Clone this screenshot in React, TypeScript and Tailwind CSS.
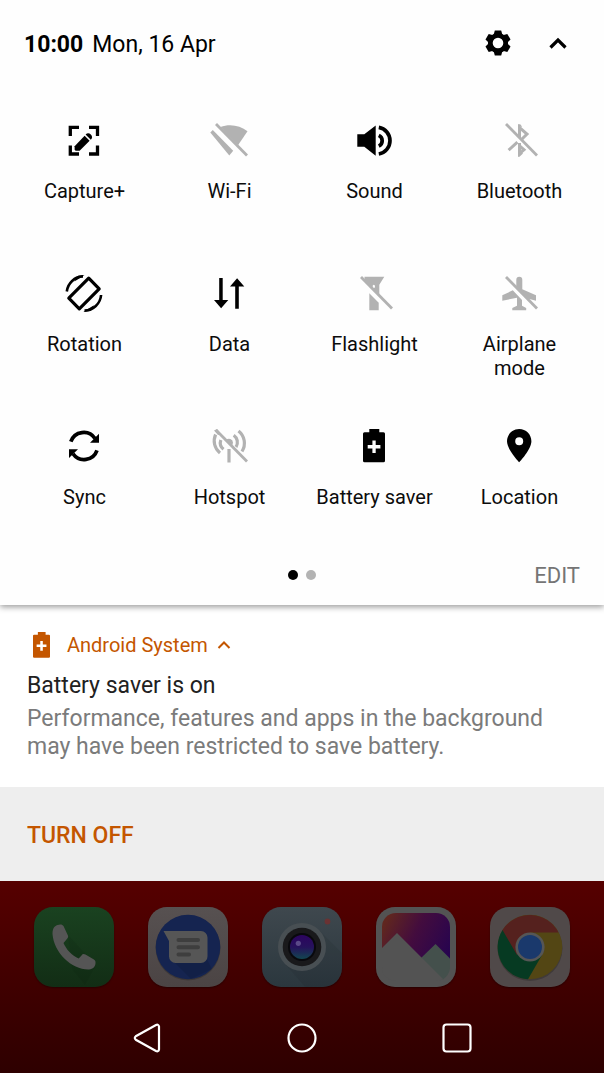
import type { ReactNode } from "react";

type Tile = { label: string; on: boolean; art: ReactNode };

const slash = <path d="M7 3 38 34.5" stroke="currentColor" strokeWidth="2.8" fill="none" />;

const batteryPath =
  "M15.3 2h10v3.3h4.2a1.5 1.5 0 0 1 1.5 1.5v27a1.5 1.5 0 0 1-1.5 1.5h-19A1.5 1.5 0 0 1 9 33.8V6.8a1.5 1.5 0 0 1 1.5-1.5h4.8zM18.4 13.4v4.7h-4.7v3.3h4.7v4.7h3.3v-4.7h4.7v-3.3h-4.7v-4.7z";

const tiles: Tile[] = [
  {
    label: "Capture+",
    on: true,
    art: (
      <>
        <path
          d="M6.3 15V6.3H15M25 6.3h8.5V15M33.5 24.5V33H25M15 33H6.3v-8.5"
          fill="none"
          stroke="currentColor"
          strokeWidth="3.3"
        />
        <path d="M10.6 25.2v3.6l1 1h4L25.6 19.8l-5-5z" />
        <path d="M21.6 13.6a3.6 3.6 0 1 1 5.2 5.2z" />
      </>
    ),
  },
  {
    label: "Wi-Fi",
    on: false,
    art: (
      <>
        <path d="M11.5 6C20 2.5 31 4 38.5 10.3L29 24.3z" />
        <path d="M3.8 9 1.3 11.5 20.3 34.5 24.2 29.8z" />
        {slash}
      </>
    ),
  },
  {
    label: "Sound",
    on: true,
    art: (
      <>
        <path d="M3.3 13.3h7L21.7 4.5v30.2L10.3 25.7h-7z" />
        <path
          d="M24.8 6.4A13.5 13.5 0 0 1 24.8 33M24.8 14.3A6 6 0 0 1 24.8 25.1"
          fill="none"
          stroke="currentColor"
          strokeWidth="3.7"
        />
      </>
    ),
  },
  {
    label: "Bluetooth",
    on: false,
    art: (
      <>
        <path
          d="M20.5 17V6.5L28 13l-5 5M9.6 29.2l8.8-8M20.5 22v10.5l4.5-3.7-5-4.5"
          fill="none"
          stroke="currentColor"
          strokeWidth="3"
        />
        <path d="M19 3.2h2.2l2 2.5H19zM19 31h3l2 1.5-3.5 3.3H19z" />
        {slash}
      </>
    ),
  },
  {
    label: "Rotation",
    on: true,
    art: (
      <>
        <path
          d="M24.7 4.2 35.2 14.8 15.3 34.8 4.8 24.2z"
          fill="none"
          stroke="currentColor"
          strokeWidth="3.2"
          strokeLinejoin="round"
        />
        <path
          d="M2.8 17.5A17 17 0 0 1 19 2.4M37.1 21A17 17 0 0 1 20.5 36.6"
          fill="none"
          stroke="currentColor"
          strokeWidth="2.6"
        />
        <path d="M20.5 1.1 14 1.8l-3.5 5.7zM19.3 37.8l7.2-.9 3.5-5.6z" />
      </>
    ),
  },
  {
    label: "Data",
    on: true,
    art: (
      <path d="M10.2 4h3.5v22h5.6l-7.2 8.3L5 26h5.2zM26.2 34.7V12.5H21l7.1-8.3 7.2 8.3h-5.5v22.2z" />
    ),
  },
  {
    label: "Flashlight",
    on: false,
    art: (
      <>
        <path
          fillRule="evenodd"
          d="M10.5 2.7h19.8l-5 8V22L10.5 7.2zM19.8 10.8a1.2 1.6 0 1 0 .01 3.2 1.2 1.6 0 1 0-.01-3.2z"
        />
        <path d="M15.3 19.3l9.4 9.4v7.6h-9.4z" />
        {slash}
      </>
    ),
  },
  {
    label: "Airplane mode",
    on: false,
    art: (
      <>
        <path d="M17.3 13V5.7a3 3 0 0 1 6 0v9.6L37 21.3v5.4l-8.5-2.2z" />
        <path d="M13.8 16.3 3.3 21.3v5.4L18 23.7v8l-4.7 2.3v2.2H27.2V34L23 31.7V26z" />
        {slash}
      </>
    ),
  },
  {
    label: "Sync",
    on: true,
    art: (
      <>
        <path
          d="M6.8 14.7A13.6 13.6 0 0 1 31 11.5M33 23.4A13.6 13.6 0 0 1 9 26.7"
          fill="none"
          stroke="currentColor"
          strokeWidth="3.7"
        />
        <path d="M35 6.8v8.9h-9zM5 31v-8.8h9z" />
      </>
    ),
  },
  {
    label: "Hotspot",
    on: false,
    art: (
      <>
        <path
          d="M29.5 4A15.5 15.5 0 0 1 33 24.5M24.7 8.3A8.5 8.5 0 0 1 27 20M6.6 7.5A15.5 15.5 0 0 0 11 26M11.8 13A8.5 8.5 0 0 0 14.5 22.3M20 22v13.6"
          fill="none"
          stroke="currentColor"
          strokeWidth="3.2"
        />
        <path d="M17 13.2A4 4 0 0 1 24 15.7L23 19zM5 3.5l3-1.5 4 5-3 1z" />
        {slash}
      </>
    ),
  },
  {
    label: "Battery saver",
    on: true,
    art: <path d={batteryPath} fillRule="evenodd" />,
  },
  {
    label: "Location",
    on: true,
    art: (
      <path
        fillRule="evenodd"
        d="M20.2 2C13.4 2 8 7.4 8 14.2 8 22.5 20.2 35.2 20.2 35.2S32.4 22.5 32.4 14.2C32.4 7.4 27 2 20.2 2zM20.2 10.3a4 4 0 1 1 0 8 4 4 0 0 1 0-8z"
      />
    ),
  },
];

function Gear() {
  return (
    <svg viewBox="-13 -13 26 26" className="size-[26px]" aria-hidden="true">
      <circle r="7.7" fill="none" stroke="#000" strokeWidth="4.8" />
      {[0, 60, 120, 180, 240, 300].map((a) => (
        <path key={a} transform={`rotate(${a})`} d="M-3.2-12.6h6.4L4.7-7h-9.4z" />
      ))}
    </svg>
  );
}

function PhoneApp() {
  return (
    <svg viewBox="0 0 80 80" className="size-20" aria-hidden="true">
      <defs>
        <linearGradient id="phone-bg" x2="0" y2="1">
          <stop stopColor="#1a4220" />
          <stop offset="1" stopColor="#122d15" />
        </linearGradient>
      </defs>
      <rect width="80" height="80" rx="19" fill="url(#phone-bg)" />
      <path d="M34 28 62 58 51 78 38 62z" fill="#000" opacity=".06" />
      <path
        d="M23.5 18C20 19 18.5 22 18.5 27 20 46 38 63 55 62.5c4-.5 6.5-3 6.5-6.5.3-2-.5-3-2-3.8l-8-4.6c-1.8-1-3-.6-4 .8l-2.8 3C38 49 32 42 29.5 36l3.8-4.5c1.2-1.3 1-2.2.4-3.5L29.5 19c-1-1.8-3.5-2-6-1z"
        fill="#555555"
      />
    </svg>
  );
}

function MessagesApp() {
  return (
    <svg viewBox="0 0 80 80" className="size-20" aria-hidden="true">
      <defs>
        <linearGradient id="msg-bg" x2="0" y2="1">
          <stop stopColor="#575151" />
          <stop offset="1" stopColor="#4b4444" />
        </linearGradient>
      </defs>
      <rect width="80" height="80" rx="19" fill="url(#msg-bg)" />
      <circle cx="40" cy="41" r="32.5" fill="#000" opacity=".2" />
      <circle cx="40" cy="40" r="32.3" fill="#152450" />
      <path d="M21 50 43 72 64 62 58 50z" fill="#000" opacity=".1" />
      <path
        d="M15.5 24H53a6.5 6.5 0 0 1 6.5 6.5v19A6.5 6.5 0 0 1 53 56H27.5a6.5 6.5 0 0 1-6.5-6.5V34z"
        fill="#565656"
      />
      <path d="M30.5 33h19.5M30.5 40.3h19.5M30.5 47.6h10.5" stroke="#3e3e3e" strokeWidth="4" strokeLinecap="round" />
    </svg>
  );
}

function CameraApp() {
  return (
    <svg viewBox="0 0 80 80" className="size-20" aria-hidden="true">
      <defs>
        <linearGradient id="cam-bg" x2="0" y2="1">
          <stop stopColor="#3f484e" />
          <stop offset="1" stopColor="#2b373e" />
        </linearGradient>
        <linearGradient id="cam-lens" x2="0" y2="1">
          <stop stopColor="#2c045f" />
          <stop offset=".5" stopColor="#26125c" />
          <stop offset="1" stopColor="#124650" />
        </linearGradient>
      </defs>
      <rect width="80" height="80" rx="19" fill="url(#cam-bg)" />
      <path d="M58 24 80 46V61Q80 80 61 80H43L24 58z" fill="#000" opacity=".06" />
      <circle cx="40" cy="40" r="24" fill="#484f53" />
      <circle cx="40" cy="40" r="19.3" fill="#19191b" />
      <circle cx="40" cy="40" r="14" fill="#09090d" />
      <circle cx="40" cy="40" r="12" fill="url(#cam-lens)" />
      <circle cx="36.3" cy="36.3" r="2.6" fill="#5b4a88" />
      <circle cx="65.5" cy="14.5" r="2.9" fill="#6a3233" />
    </svg>
  );
}

function GalleryApp() {
  return (
    <svg viewBox="0 0 80 80" className="size-20" aria-hidden="true">
      <defs>
        <linearGradient id="sky" x1="0" y1=".3" x2="1" y2=".7">
          <stop stopColor="#60261f" />
          <stop offset=".45" stopColor="#430c3e" />
          <stop offset="1" stopColor="#27044f" />
        </linearGradient>
        <clipPath id="frame">
          <rect width="68" height="68" x="6" y="6" rx="14" />
        </clipPath>
      </defs>
      <rect width="80" height="80" rx="19" fill="#535353" />
      <g clipPath="url(#frame)">
        <path d="M6 6h68v46L59.5 48 46 51 21 60 6 46z" fill="url(#sky)" />
        <path d="M45 51 59.5 37 75 52.5V75H66z" fill="#44504c" />
        <path d="M5 42 21 26 69 74V80H5z" fill="#535353" />
      </g>
    </svg>
  );
}

function ChromeApp() {
  return (
    <svg viewBox="0 0 80 80" className="size-20" aria-hidden="true">
      <rect width="80" height="80" rx="19" fill="#504949" />
      <circle cx="40" cy="41.5" r="32.5" fill="#000" opacity=".2" />
      <circle cx="40" cy="40" r="32.3" fill="#534614" />
      <path d="M12.5 23A32.3 32.3 0 0 0 38 72.3L52 48 40 40z" fill="#063a22" />
      <path d="M12.5 23A32.3 32.3 0 0 1 68.5 25.5H40L27 48z" fill="#55211e" />
      <circle cx="40" cy="40" r="14.6" fill="#565656" />
      <circle cx="40" cy="40" r="12" fill="#1a396c" />
    </svg>
  );
}

const apps = [
  { name: "Phone", art: <PhoneApp /> },
  { name: "Messages", art: <MessagesApp /> },
  { name: "Camera", art: <CameraApp /> },
  { name: "Gallery", art: <GalleryApp /> },
  { name: "Chrome", art: <ChromeApp /> },
];

const navigation = [
  {
    name: "Back",
    art: <path d="M28 4.5v23q-.5 2.5-3 1.5L4.8 17.8q-2-1.8 0-3.6L25 3q2.5-1 3 1.5z" />,
  },
  { name: "Home", art: <circle cx="16" cy="16" r="13.5" /> },
  { name: "Recent apps", art: <rect x="2.5" y="2.5" width="27" height="27" rx="3" /> },
];

export default function App() {
  return (
    <main className="flex min-h-screen w-full flex-col bg-white font-['Roboto','Liberation_Sans',sans-serif] text-black">
      <section
        aria-label="Quick settings"
        className="relative bg-[#fefefe] pb-[17px] shadow-[0_2px_6px_rgba(0,0,0,0.4)]"
      >
        <header className="flex h-[86px] items-center justify-between pr-9 pl-6">
          <p className="flex gap-[9px] pt-[3px] text-[23px] leading-7">
            <time className="font-bold">10:00</time>
            <span>Mon, 16 Apr</span>
          </p>
          <div className="flex items-center gap-[37px]">
            <button type="button" aria-label="Settings">
              <Gear />
            </button>
            <button type="button" aria-label="Collapse">
              <svg viewBox="0 0 20 20" className="size-5" aria-hidden="true">
                <path d="M2.5 14.5 10 7 17.5 14.5" fill="none" stroke="#000" strokeWidth="3.2" />
              </svg>
            </button>
          </div>
        </header>

        <div className="grid auto-rows-[153px] grid-cols-4 px-3 pt-[35px]">
          {tiles.map((t) => (
            <button key={t.label} type="button" aria-pressed={t.on} className="flex flex-col items-center">
              <svg
                viewBox="0 0 41 40"
                aria-hidden="true"
                fill="currentColor"
                className={t.on ? "h-10 w-[41px] text-black" : "h-10 w-[41px] text-[#b2b2b2]"}
              >
                {t.art}
              </svg>
              <span className="mt-[18px] max-w-[125px] text-[20px] leading-6 text-[#0c0c0c]">{t.label}</span>
            </button>
          ))}
        </div>

        <footer className="-mt-[18px] grid grid-cols-[1fr_auto_1fr] items-center px-6">
          <span className="h-[25px]" />
          <span className="flex gap-2">
            <i className="size-[10px] rounded-full bg-black" />
            <i className="size-[10px] rounded-full bg-[#b3b3b3]" />
          </span>
          <button type="button" className="justify-self-end pt-0.5 text-[22px] leading-6 text-[#757575]">
            EDIT
          </button>
        </footer>
      </section>

      <article className="px-[27px] py-[26px]">
        <header className="flex h-7 items-center text-[#c45600]">
          <svg
            viewBox="9 2 22 33.4"
            className="ml-[6px] h-[26px] w-[17px]"
            fill="currentColor"
            aria-hidden="true"
          >
            <path d={batteryPath} fillRule="evenodd" />
          </svg>
          <span className="ml-[17px] text-[20px] leading-7">Android System</span>
          <svg viewBox="0 0 14 10" className="ml-[9px] h-[10px] w-[14px]" aria-hidden="true">
            <path d="M1.5 8 7 2.5 12.5 8" fill="none" stroke="currentColor" strokeWidth="2" />
          </svg>
        </header>
        <h2 className="mt-[13px] text-[23px] leading-7 text-[#212121]">Battery saver is on</h2>
        <p className="mt-[5px] text-[23px] leading-7 text-[#7b7b7b]">
          Performance, features and apps in the background may have been restricted to save battery.
        </p>
      </article>

      <div className="flex h-[94px] items-center bg-[#eeeeee] px-[27px]">
        <button type="button" className="pt-[3px] text-[23px] leading-7 font-medium text-[#c45600]">
          TURN OFF
        </button>
      </div>

      <section className="flex flex-1 flex-col bg-linear-to-b from-[#560000] to-[#2e0000] pt-[26px] pb-[19px]">
        <div className="flex justify-between px-[34px]">
          {apps.map((a) => (
            <button
              key={a.name}
              type="button"
              aria-label={a.name}
              className="rounded-[19px] shadow-[0_1px_2px_rgba(0,0,0,0.4)]"
            >
              {a.art}
            </button>
          ))}
        </div>
        <nav className="mx-auto mt-[35px] grid w-full max-w-[465px] grid-cols-3 justify-items-center">
          {navigation.map((n) => (
            <button key={n.name} type="button" aria-label={n.name}>
              <svg
                viewBox="0 0 32 32"
                className="size-8"
                fill="none"
                stroke="#fff"
                strokeWidth="2.2"
                aria-hidden="true"
              >
                {n.art}
              </svg>
            </button>
          ))}
        </nav>
      </section>
    </main>
  );
}
